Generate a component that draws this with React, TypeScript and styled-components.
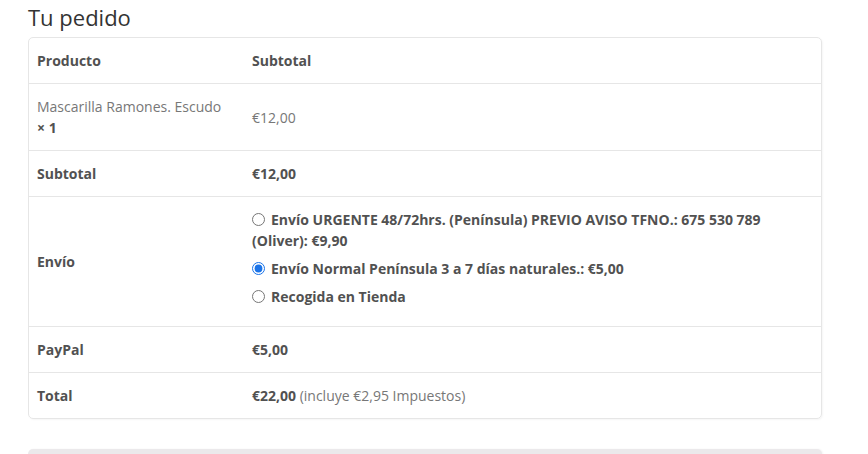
import React, { useState } from 'react';
import styled, { createGlobalStyle } from 'styled-components';

const GlobalStyle = createGlobalStyle`
	html, body {
		margin: 0;
		padding: 0;
		background: #fff;
	}
	body {
		font-family: 'Open Sans', 'Noto Sans', sans-serif;
		font-size: 14px;
		color: #515151;
	}
`;

const Page = styled.div`
	padding: 0 46px 0 28px;
	width: 794px;
`;

const Heading = styled.h3`
	margin: 0 0 5px;
	padding-top: 2px;
	font-size: 22px;
	font-weight: 400;
	line-height: 30px;
	color: #333;
`;

const Table = styled.table`
	width: 100%;
	border: 1px solid #e6e6e6;
	border-radius: 5px;
	border-collapse: separate;
	border-spacing: 0;
	margin-bottom: 30px;
	box-shadow: 1px 1px 2px rgba(0, 0, 0, 0.04);
`;

const Cell = styled.td<{ $bold?: boolean; $muted?: boolean; $first?: boolean; $top?: boolean }>`
	padding: 12px 8px;
	line-height: 21px;
	text-align: left;
	vertical-align: middle;
	border-top: ${(p) => (p.$top ? 'none' : '1px solid #e6e6e6')};
	font-weight: ${(p) => (p.$bold ? 700 : 400)};
	color: ${(p) => (p.$muted ? '#777' : '#515151')};
	width: ${(p) => (p.$first ? '199px' : 'auto')};
`;

const Qty = styled.strong`
	color: #515151;
	font-weight: 700;
`;

const Note = styled.span`
	font-weight: 400;
	color: #777;
`;

const MethodList = styled.ul`
	list-style: none;
	margin: 0;
	padding: 0;
`;

const Method = styled.li`
	margin-bottom: 7px;
	line-height: 21px;
	font-weight: 700;
	color: #515151;

	input {
		margin: 0 6px 0 0;
		width: 13px;
		height: 13px;
		vertical-align: -1px;
		accent-color: #1a73e8;
	}
`;

const PaymentBox = styled.div`
	height: 20px;
	background: #ebe9eb;
	border-radius: 5px 5px 0 0;
	box-shadow: 1px 0 2px rgba(0, 0, 0, 0.05);
`;

const methods = [
	{ id: 'urgente', label: 'Envío URGENTE 48/72hrs. (Península) PREVIO AVISO TFNO.: 675 530 789 (Oliver): €9,90' },
	{ id: 'normal', label: 'Envío Normal Península 3 a 7 días naturales.: €5,00' },
	{ id: 'tienda', label: 'Recogida en Tienda' },
];

const App = (): JSX.Element => {
	const [shipping, setShipping] = useState<string>('normal');

	return (
		<>
			<GlobalStyle />
			<Page>
				<Heading>Tu pedido</Heading>
				<Table>
					<tbody>
						<tr>
							<Cell as="th" $bold $first $top>Producto</Cell>
							<Cell as="th" $bold $top>Subtotal</Cell>
						</tr>
						<tr>
							<Cell $muted $first>
								Mascarilla Ramones. Escudo
								<br />
								<Qty>× 1</Qty>
							</Cell>
							<Cell $muted>€12,00</Cell>
						</tr>
						<tr>
							<Cell as="th" $bold $first>Subtotal</Cell>
							<Cell $bold>€12,00</Cell>
						</tr>
						<tr>
							<Cell as="th" $bold $first>Envío</Cell>
							<Cell>
								<MethodList>
									{methods.map((m) => (
										<Method key={m.id}>
											<input
												type="radio"
												name="shipping"
												checked={shipping === m.id}
												onChange={() => setShipping(m.id)}
											/>
											{m.label}
										</Method>
									))}
								</MethodList>
							</Cell>
						</tr>
						<tr>
							<Cell as="th" $bold $first>PayPal</Cell>
							<Cell $bold>€5,00</Cell>
						</tr>
						<tr>
							<Cell as="th" $bold $first>Total</Cell>
							<Cell $bold>
								€22,00 <Note>(incluye €2,95 Impuestos)</Note>
							</Cell>
						</tr>
					</tbody>
				</Table>
				<PaymentBox />
			</Page>
		</>
	);
};

export default App;
